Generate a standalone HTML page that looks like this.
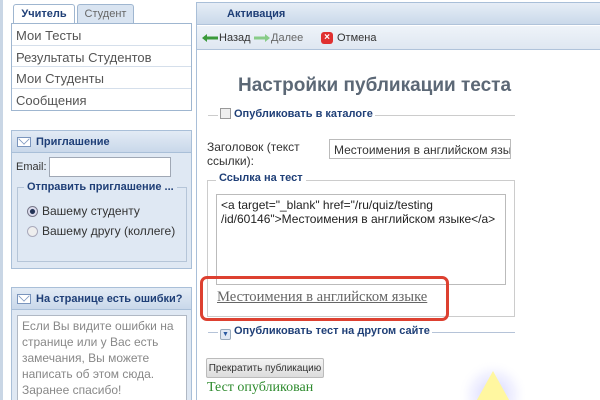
<!DOCTYPE html>
<html><head><meta charset="utf-8"><style>
*{margin:0;padding:0;box-sizing:border-box}
html,body{width:600px;height:400px;overflow:hidden}
body{background:#fff;font-family:"Liberation Sans","DejaVu Sans",sans-serif;font-size:12px;color:#333}
#w{position:relative;width:600px;height:400px;overflow:hidden}
.abs{position:absolute}
.tab{position:absolute;top:4px;height:19px;border:1px solid #9fb6d0;border-bottom:none;border-radius:3px 3px 0 0;font-size:11px;padding-top:3px;text-align:center}
.menu{left:11px;top:23px;width:181px;height:88px;border:1px solid #9fb6d0;background:#fff}
.menu div{height:21.5px;border-bottom:1px solid #d5dfeb;font-size:13px;color:#555;padding:4px 0 0 4px}
.menu div:last-child{border:none}
.panel{border:1px solid #a9bfd8;background:#dfe8f3;overflow:hidden}
.ph{height:22px;background:linear-gradient(#e3ebf5,#c9d8ea);border-bottom:1px solid #a9bfd8;font-weight:bold;color:#1f3f77;font-size:11px;padding:5px 0 0 24px;position:relative}
.env{position:absolute;left:5px;top:6px;width:14px;height:10px;border:1px solid #7a95bd;background:#fff}
.env:after{content:"";position:absolute;left:1px;top:-4px;width:9px;height:9px;border-right:1px solid #7a95bd;border-bottom:1px solid #7a95bd;transform:rotate(45deg) scale(.8,.8)}
</style></head><body><div id="w">
<div class="abs" style="left:0;top:0;width:3px;height:400px;background:#c9d6e5"></div>
<div class="tab" style="left:13px;width:62px;background:#fff;font-weight:bold;color:#1f3f77;height:20px">Учитель</div>
<div class="tab" style="left:77px;width:57px;background:#d9e4f1;color:#666">Студент</div>
<div class="abs menu"><div>Мои Тесты</div><div>Результаты Студентов</div><div>Мои Студенты</div><div>Сообщения</div></div>

<div class="abs panel" style="left:11px;top:130px;width:181px;height:139px">
<div class="ph"><span class="env"></span>Приглашение</div>
<div class="abs" style="left:4px;top:30px;font-size:11px">Email:</div>
<div class="abs" style="left:37px;top:26px;width:122px;height:20px;background:#fff;border:1px solid #a0a8b5"></div>
<div class="abs" style="left:5px;top:56px;width:170px;height:75px;border:1px solid #b5c5d8"></div>
<div class="abs" style="left:12px;top:50px;background:#dfe8f3;padding:0 3px;font-size:11px;font-weight:bold;color:#1f3f77">Отправить приглашение ...</div>
<div class="abs" style="left:15px;top:75px;width:11px;height:11px;border-radius:50%;border:1px solid #778;background:radial-gradient(#235 35%,#dde 45%)"></div>
<div class="abs" style="left:30px;top:73px;font-size:12px">Вашему студенту</div>
<div class="abs" style="left:15px;top:95px;width:11px;height:11px;border-radius:50%;border:1px solid #aab;background:#eee"></div>
<div class="abs" style="left:30px;top:93px;font-size:12px">Вашему другу (коллеге)</div>
</div>

<div class="abs panel" style="left:11px;top:287px;width:181px;height:113px;border-bottom:none">
<div class="ph"><span class="env"></span>На странице есть ошибки?</div>
<div class="abs" style="left:5px;top:27px;width:170px;height:86px;background:#fff;border:1px solid #b0b8c4;border-bottom:none;color:#888;font-size:12px;line-height:16px;padding:2px 4px">Если Вы видите ошибки на странице или у Вас есть замечания, Вы можете написать об этом сюда. Заранее спасибо!</div>
</div>

<div class="abs" style="left:196px;top:2px;width:404px;height:398px;border-left:1px solid #a9bfd8;border-top:1px solid #a9bfd8"></div>
<div class="abs" style="left:197px;top:3px;width:403px;height:22px;background:linear-gradient(#e6edf6,#cad9ea);border-bottom:1px solid #b0c3da;font-weight:bold;color:#1f3f77;font-size:11px;padding:5px 0 0 30px">Активация</div>
<div class="abs" style="left:197px;top:26px;width:403px;height:24px;background:linear-gradient(#eef3f9,#dfe7f1);border-bottom:1px solid #b0c3da;font-size:11px;color:#333">
<svg class="abs" style="left:5px;top:8px" width="16" height="8"><path d="M0 4 L5 0 L5 2.5 L16 2.5 L16 5.5 L5 5.5 L5 8 Z" fill="#3a9a3a"/></svg><span class="abs" style="left:22px;top:6px">Назад</span>
<svg class="abs" style="left:57px;top:8px" width="16" height="8"><path d="M16 4 L11 0 L11 2.5 L0 2.5 L0 5.5 L11 5.5 L11 8 Z" fill="#8c8"/></svg><span class="abs" style="left:74px;top:6px;color:#666">Далее</span>
<span class="abs" style="left:124px;top:6px;width:12px;height:12px;border-radius:3px;background:#e03030;color:#fff;font-size:10px;line-height:12px;text-align:center;font-weight:bold">×</span><span class="abs" style="left:140px;top:6px">Отмена</span>
</div>

<div class="abs" style="left:238px;top:75px;font-size:19px;font-weight:bold;color:#5c6876">Настройки публикации теста</div>
<div class="abs" style="left:208px;top:115px;width:307px;border-top:1px solid #ccc"></div>
<div class="abs" style="left:218px;top:108px;background:#fff;padding:0 2px 0 2px;font-size:11px;font-weight:bold;color:#1f3f77"><span style="display:inline-block;width:11px;height:11px;border:1px solid #999;background:#eee;vertical-align:-2px;margin-right:3px"></span>Опубликовать в каталоге</div>
<div class="abs" style="left:207px;top:140px;font-size:12px;line-height:14px;color:#333">Заголовок (текст<br>ссылки):</div>
<div class="abs" style="left:329px;top:139px;width:182px;height:20px;border:1px solid #bbb;font-size:12px;padding:3px 0 0 4px;white-space:nowrap;overflow:hidden">Местоимения в английском языке</div>
<div class="abs" style="left:207px;top:180px;width:308px;height:137px;border:1px solid #ccc"></div>
<div class="abs" style="left:216px;top:172px;background:#fff;padding:0 3px;font-size:11px;font-weight:bold;color:#1f3f77">Ссылка на тест</div>
<div class="abs" style="left:216px;top:194px;width:290px;height:91px;border:1px solid #bbb;font-size:12px;line-height:14px;padding:3px 4px 0 4px;color:#222">&lt;a target="_blank" href="/ru/quiz/testing<br>/id/60146"&gt;Местоимения в английском языке&lt;/a&gt;</div>
<div class="abs" style="left:217px;top:289px;font-family:'Liberation Serif',serif;font-size:14.6px;color:#666;text-decoration:underline">Местоимения в английском языке</div>
<div class="abs" style="left:200px;top:276px;width:249px;height:45px;border:3px solid #dd4030;border-radius:7px"></div>
<div class="abs" style="left:208px;top:332px;width:307px;border-top:1px solid #b5c3d8"></div>
<div class="abs" style="left:218px;top:325px;background:#fff;padding:0 2px;font-size:11px;font-weight:bold;color:#1f3f77"><span style="display:inline-block;width:11px;height:11px;border:1px solid #9ab;border-radius:2px;background:#dfe8f3;vertical-align:-2px;margin-right:3px;font-size:7px;line-height:10px;text-align:center;color:#2a5aa0">▼</span>Опубликовать тест на другом сайте</div>
<div class="abs" style="left:206px;top:358px;width:118px;height:20px;border:1px solid #bbb;border-radius:2px;background:linear-gradient(#f4f4f4,#dcdcdc);font-size:10px;padding-top:4px;text-align:center;color:#333;white-space:nowrap">Прекратить публикацию</div>
<div class="abs" style="left:207px;top:380px;font-family:'Liberation Serif',serif;font-size:14px;color:#2e8b2e">Тест опубликован</div>
<svg class="abs" style="left:443px;top:345px" width="100" height="55">
<defs><radialGradient id="g" cx="50" cy="50" r="50" gradientUnits="userSpaceOnUse"><stop offset="0" stop-color="#a0a0ff" stop-opacity=".55"/><stop offset=".45" stop-color="#d2d2ff" stop-opacity=".25"/><stop offset=".7" stop-color="#fff" stop-opacity="0"/></radialGradient></defs>
<rect width="100" height="55" fill="url(#g)"/>
<path d="M50 26 L75 71 L25 71 Z" fill="#fff7a0"/>
</svg>
</div></body></html>
